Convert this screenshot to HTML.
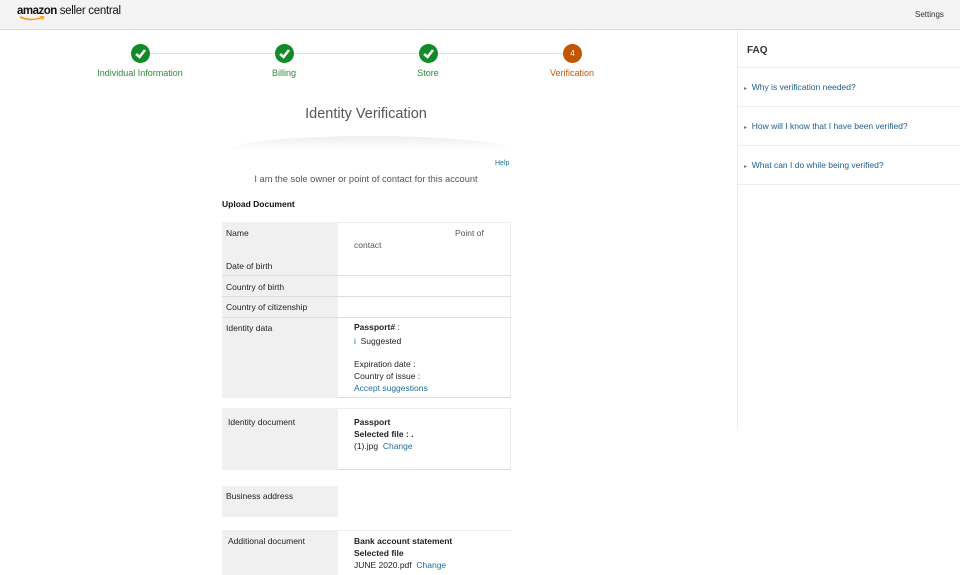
<!DOCTYPE html>
<html><head><meta charset="utf-8"><style>
*{margin:0;padding:0;box-sizing:border-box}
body{width:960px;height:575px;overflow:hidden;background:#fff;font-family:"Liberation Sans",sans-serif;position:relative;color:#111}
.a{position:absolute}
.hdr{left:0;top:0;width:960px;height:30px;background:#f3f3f3;border-bottom:1px solid #ddd}
.step{font-size:9px;color:#2a8a3a;text-align:center;width:140px}
.c{width:19px;height:19px;border-radius:50%;background:#128a28}
.t{font-size:8.5px;color:#222}
.lbl{background:#f0f0f0}
.lnk{color:#1d6f9f}
.faq{font-size:8.5px;color:#1d5d8a;left:744px}
.sep{left:738px;width:222px;height:1px;background:#eee}
</style></head><body>
<div class="a hdr"></div>
<div class="a" style="left:17px;top:5px;font-size:11.5px;letter-spacing:-0.3px"><b style="letter-spacing:-0.5px">amazon</b> seller central</div>
<svg class="a" style="left:19px;top:16px" width="26" height="6"><path d="M1 1 Q13 6 24 1" stroke="#f90" stroke-width="1.5" fill="none"/><path d="M21 0 L25 1 L23 4" stroke="#f90" stroke-width="1" fill="none"/></svg>
<div class="a" style="left:915px;top:10px;font-size:8px;color:#333">Settings</div>

<div class="a" style="left:140px;top:53px;width:432px;height:1px;background:#ddd"></div>
<div class="a c" style="left:131px;top:44px"></div>
<div class="a c" style="left:275px;top:44px"></div>
<div class="a c" style="left:419px;top:44px"></div>
<div class="a c" style="left:563px;top:44px;background:#c45500;color:#fff;font-size:8px;text-align:center;line-height:19px">4</div>
<svg class="a" style="left:131px;top:44px" width="19" height="19"><path d="M5 10 L8.5 13 L14 6" stroke="#fff" stroke-width="2.5" fill="none"/></svg>
<svg class="a" style="left:275px;top:44px" width="19" height="19"><path d="M5 10 L8.5 13 L14 6" stroke="#fff" stroke-width="2.5" fill="none"/></svg>
<svg class="a" style="left:419px;top:44px" width="19" height="19"><path d="M5 10 L8.5 13 L14 6" stroke="#fff" stroke-width="2.5" fill="none"/></svg>
<div class="a step" style="left:70px;top:68px">Individual Information</div>
<div class="a step" style="left:214px;top:68px">Billing</div>
<div class="a step" style="left:358px;top:68px">Store</div>
<div class="a step" style="left:502px;top:68px;color:#c45500">Verification</div>

<div class="a" style="left:216px;top:106px;width:300px;text-align:center;font-size:14.5px;color:#555">Identity Verification</div>
<div class="a" style="left:230px;top:136px;width:280px;height:14px;background:linear-gradient(#eee,#fff);border-radius:50%/100% 100% 0 0"></div>
<div class="a lnk" style="left:495px;top:160px;font-size:7px">Help</div>
<div class="a" style="left:216px;top:174px;width:300px;text-align:center;font-size:9.3px;color:#555">I am the sole owner or point of contact for this account</div>
<div class="a" style="left:222px;top:199px;font-size:8.5px;font-weight:bold">Upload Document</div>

<div class="a" style="left:222px;top:222px;width:289px;height:176px;border:1px solid #eee;border-bottom-color:#ddd"></div>
<div class="a lbl" style="left:222px;top:222px;width:116px;height:176px"></div>
<div class="a" style="left:222px;top:275px;width:289px;height:1px;background:#ddd"></div>
<div class="a" style="left:222px;top:296px;width:289px;height:1px;background:#ddd"></div>
<div class="a" style="left:222px;top:317px;width:289px;height:1px;background:#ddd"></div>
<div class="a t" style="left:226px;top:228px">Name</div>
<div class="a t" style="left:455px;top:228px;color:#555">Point of</div>
<div class="a t" style="left:354px;top:240px;color:#555">contact</div>
<div class="a t" style="left:226px;top:261px">Date of birth</div>
<div class="a t" style="left:226px;top:282px">Country of birth</div>
<div class="a t" style="left:226px;top:302px">Country of citizenship</div>
<div class="a t" style="left:226px;top:323px">Identity data</div>
<div class="a t" style="left:354px;top:322px"><b>Passport#</b> :</div>
<div class="a t" style="left:354px;top:336px"><span class="lnk">i</span>&nbsp; Suggested</div>
<div class="a t" style="left:354px;top:359px">Expiration date :</div>
<div class="a t" style="left:354px;top:371px">Country of issue :</div>
<div class="a t lnk" style="left:354px;top:383px">Accept suggestions</div>

<div class="a" style="left:222px;top:408px;width:289px;height:62px;border:1px solid #eee;border-bottom-color:#ddd"></div>
<div class="a lbl" style="left:222px;top:408px;width:116px;height:62px"></div>
<div class="a t" style="left:228px;top:417px">Identity document</div>
<div class="a t" style="left:354px;top:417px;font-weight:bold">Passport</div>
<div class="a t" style="left:354px;top:429px;font-weight:bold">Selected file : .</div>
<div class="a t" style="left:354px;top:441px">(1).jpg &nbsp;<span class="lnk">Change</span></div>

<div class="a lbl" style="left:222px;top:486px;width:116px;height:31px"></div>
<div class="a t" style="left:226px;top:491px">Business address</div>

<div class="a lbl" style="left:222px;top:530px;width:116px;height:45px"></div>
<div class="a" style="left:222px;top:530px;width:289px;height:1px;background:#eee"></div>
<div class="a t" style="left:228px;top:536px">Additional document</div>
<div class="a t" style="left:354px;top:536px;font-weight:bold">Bank account statement</div>
<div class="a t" style="left:354px;top:548px;font-weight:bold">Selected file</div>
<div class="a t" style="left:354px;top:560px">JUNE 2020.pdf &nbsp;<span class="lnk">Change</span></div>

<div class="a" style="left:737px;top:30px;width:1px;height:400px;background:#eee"></div>
<div class="a" style="left:747px;top:45px;font-size:10px;font-weight:bold;color:#333">FAQ</div>
<div class="a sep" style="top:67px"></div>
<div class="a faq" style="top:82px"><span style="color:#777;font-size:6px">▸</span>&nbsp; Why is verification needed?</div>
<div class="a sep" style="top:106px"></div>
<div class="a faq" style="top:121px"><span style="color:#777;font-size:6px">▸</span>&nbsp; How will I know that I have been verified?</div>
<div class="a sep" style="top:145px"></div>
<div class="a faq" style="top:160px"><span style="color:#777;font-size:6px">▸</span>&nbsp; What can I do while being verified?</div>
<div class="a sep" style="top:184px"></div>
</body></html>
